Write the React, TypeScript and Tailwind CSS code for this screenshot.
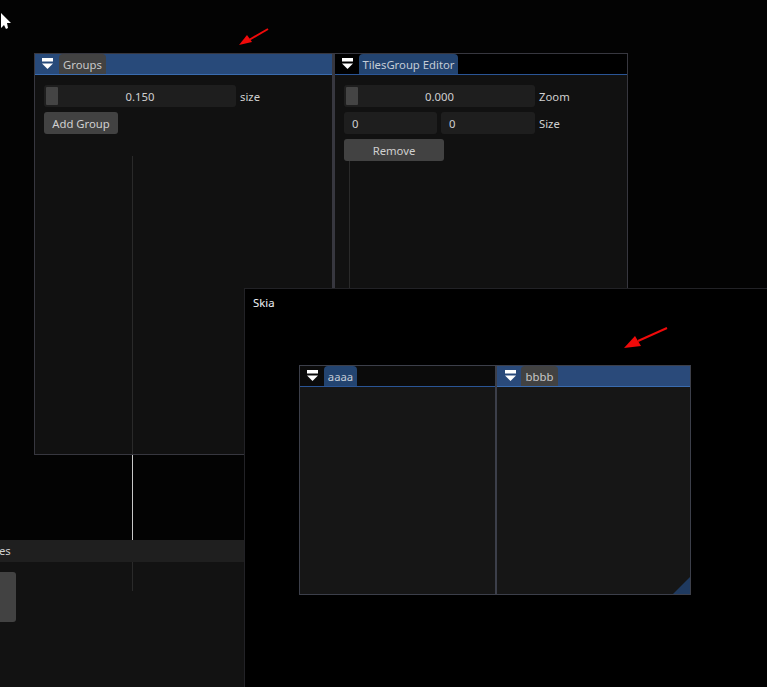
import React from "react";

const font = { fontFamily: '"Noto Sans", "Open Sans", sans-serif' };

function Menu() {
  return (
    <svg width="11" height="11" viewBox="0 0 11 11" className="block shrink-0">
      <rect x="0" y="0" width="11" height="3.5" fill="#fff" />
      <polygon points="0,5.5 11,5.5 5.5,11" fill="#fff" />
    </svg>
  );
}

function TitleBar({
  label,
  focused,
  bar,
  tab,
  line,
  w,
  iconLeft,
}: {
  label: string;
  focused?: boolean;
  bar: string;
  tab: string;
  line: string;
  w: string;
  iconLeft: string;
}) {
  return (
    <div className="flex shrink-0 flex-col">
      <div className={`flex h-[20px] items-end ${bar}`}>
        <div className={`h-[20px] w-[24px] pt-[4px] ${iconLeft}`}>
          <Menu />
        </div>
        <div className={`flex h-[20px] items-center justify-center rounded-t-[4px] pt-[2px] text-[11.3px] ${tab} ${w} ${focused ? "text-[#c8c8c8]" : "text-[#c4ccd6]"}`}>
          {label}
        </div>
      </div>
      <div className={`h-px ${line}`} />
    </div>
  );
}

function Slider({ value, w }: { value: string; w: string }) {
  return (
    <div className={`relative flex h-[22px] items-center justify-center rounded-[3px] bg-[#1e1e1e] pt-[2px] text-[11.3px] text-[#d0d0d0] ${w}`}>
      <div className="absolute left-[2px] top-[2px] h-[18px] w-[12px] rounded-[1px] bg-[#444444]" />
      {value}
    </div>
  );
}

function Field({ value, w }: { value: string; w: string }) {
  return (
    <div className={`flex h-[22px] items-center rounded-[3px] bg-[#1e1e1e] pl-2 pt-[2px] text-[11.3px] text-[#d0d0d0] ${w}`}>{value}</div>
  );
}

function Button({ label, w }: { label: string; w: string }) {
  return (
    <div className={`flex h-[22px] items-center justify-center rounded-[3px] bg-[#424242] pt-[2px] text-[11.3px] text-[#d0d0d0] ${w}`}>{label}</div>
  );
}

function Label({ text }: { text: string }) {
  return <span className="pt-[2px] text-[11.3px] text-[#d0d0d0]">{text}</span>;
}

export default function App() {
  return (
    <div className="relative h-[687px] w-[767px] overflow-hidden bg-[#030303]" style={font}>
      {/* cursor */}
      <svg width="12" height="18" viewBox="0 0 12 18" className="absolute left-0 top-[12px]">
        <polygon points="1,1 1,16 4,13 6,17 8,16 7,11 11,11" fill="#fff" />
      </svg>

      {/* arrow over the first dock */}
      <svg width="32" height="20" viewBox="0 0 32 20" className="absolute left-[238px] top-[27px]">
        <line x1="30" y1="2" x2="11" y2="13" stroke="#f00a0a" strokeWidth="2" />
        <polygon points="1,18 9,8 14,15" fill="#f00a0a" />
      </svg>

      {/* bottom-left window */}
      <div className="absolute left-0 top-[540px] flex h-[147px] w-[245px] flex-col bg-[#121212]">
        <div className="flex h-[22px] items-center bg-[#1f1f1f] pt-[1px] text-[11.3px] text-[#d0d0d0]">
          <span className="-ml-[1px]">es</span>
        </div>
        <div className="mt-[10px] h-[50px] w-[16px] rounded-r-[3px] bg-[#424242]" />
      </div>

      {/* vertical guide */}
      <div className="absolute left-[132px] top-[455px] h-[85px] w-px bg-[#c8c8c8]" />
      <div className="absolute left-[132px] top-[562px] h-[29px] w-px bg-[#2a2a2a]" />

      {/* Groups + editor dock */}
      <div className="absolute left-[34px] top-[53px] flex h-[402px] w-[594px] border border-[#37373f] bg-[#111111]">
        <div className="relative flex w-[297px] flex-col">
          <TitleBar label="Groups" focused bar="bg-[#284a7a]" line="bg-[#3a6cb0]" tab="bg-[#424242]" w="w-[47px]" iconLeft="pl-[7px]" />
          <div className="flex flex-col gap-[5px] px-[9px] pt-[10px]">
            <div className="flex items-center gap-[4px]">
              <Slider value="0.150" w="w-[192px]" />
              <Label text="size" />
            </div>
            <Button label="Add Group" w="w-[74px]" />
          </div>
          <div className="absolute left-[97px] top-[102px] h-[298px] w-px bg-[#2a2a2a]" />
        </div>
        <div className="w-[3px] bg-[#37373f]" />
        <div className="relative flex flex-1 flex-col">
          <TitleBar label="TilesGroup Editor" bar="bg-[#000000]" line="bg-[#2a5596]" tab="bg-[#234470]" w="w-[99px]" iconLeft="pl-[7px]" />
          <div className="flex flex-col gap-[5px] px-[9px] pt-[10px]">
            <div className="flex items-center gap-[4px]">
              <Slider value="0.000" w="w-[191px]" />
              <Label text="Zoom" />
            </div>
            <div className="flex items-center gap-[4px]">
              <Field value="0" w="w-[93px]" />
              <Field value="0" w="w-[94px]" />
              <Label text="Size" />
            </div>
            <Button label="Remove" w="w-[100px]" />
          </div>
          <div className="absolute left-[14px] top-[107px] h-[180px] w-px bg-[#2a2a2a]" />
        </div>
      </div>

      {/* Skia window */}
      <div className="absolute left-[244px] top-[288px] h-[399px] w-[523px] border-l border-t border-[#222226] bg-black">
        <div className="pl-[8px] pt-[6px] text-[11.3px] text-[#eef2f5]">Skia</div>
        <svg width="46" height="24" viewBox="0 0 46 24" className="absolute left-[378px] top-[37px]">
          <line x1="44" y1="2" x2="15" y2="15" stroke="#f00a0a" strokeWidth="2" />
          <polygon points="1,22 12,10 18,20" fill="#f00a0a" />
        </svg>
        <div className="absolute left-[54px] top-[76px] flex h-[230px] w-[392px] border border-[#3c3f4a] bg-[#161616]">
          <div className="flex w-[195px] flex-col">
            <TitleBar label="aaaa" bar="bg-[#0b0b0b]" line="bg-[#2a5596]" tab="bg-[#234470]" w="w-[33px]" iconLeft="pl-[7px]" />
          </div>
          <div className="w-[2px] bg-[#3c3f4a]" />
          <div className="relative flex flex-1 flex-col">
            <TitleBar label="bbbb" focused bar="bg-[#2a4a7a]" line="bg-[#3a6cb0]" tab="bg-[#424242]" w="w-[37px]" iconLeft="pl-[8px]" />
            <svg width="17" height="17" viewBox="0 0 17 17" className="absolute bottom-0 right-0">
              <polygon points="17,0 17,17 0,17" fill="#1f3a60" />
            </svg>
          </div>
        </div>
      </div>
    </div>
  );
}
